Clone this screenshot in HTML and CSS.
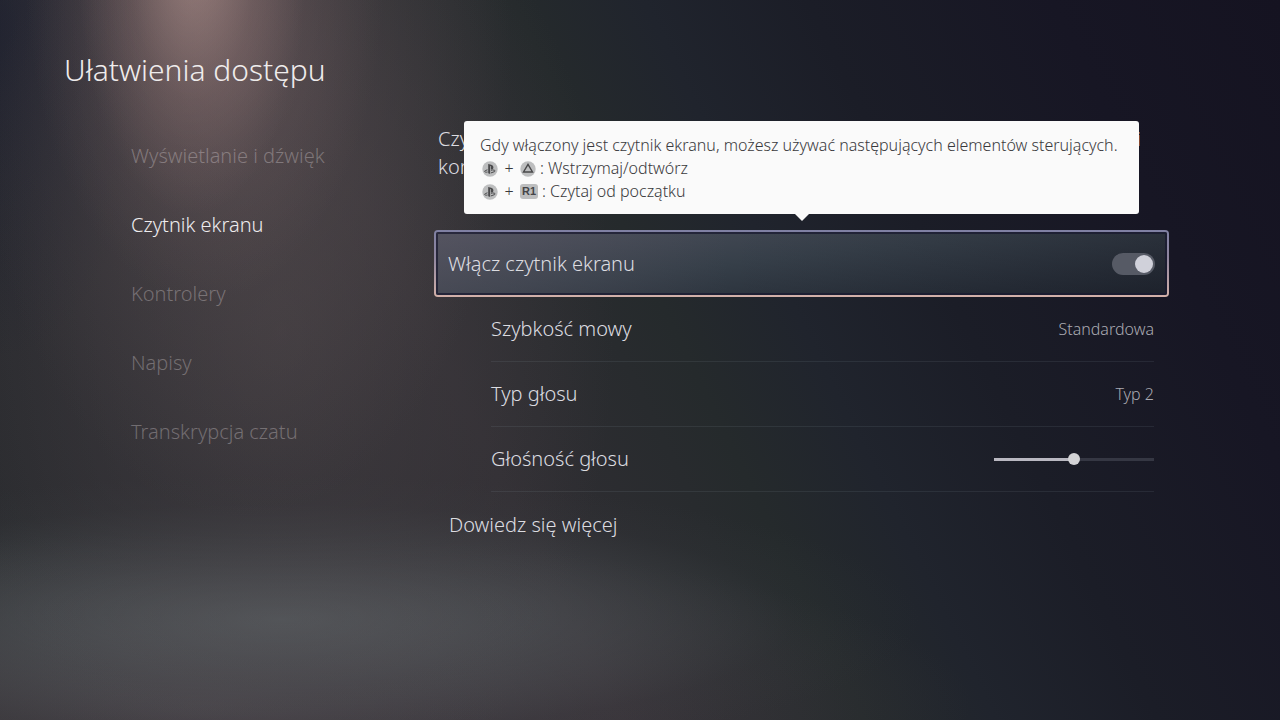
FILE: index.html
```html
<!DOCTYPE html>
<html lang="pl">
<head>
<meta charset="utf-8">
<meta name="viewport" content="width=device-width, initial-scale=1">
<title>Ułatwienia dostępu</title>
<link rel="stylesheet" href="styles.css">
</head>
<body>
<svg class="symbols" aria-hidden="true">
  <symbol id="ps" viewBox="0 0 16 16">
    <circle cx="8" cy="8" r="7.7" fill="#bdbebf"/>
    <path d="M6.2 3v9.200l2 .7V5.200c0-.5.7-.4.7.2v2.900c1.500.6 2.500-.2 2.500-1.800 0-1.500-.7-2.200-2.200-2.700z" fill="#4a4a4c"/>
    <path d="M5.500 8.800 3.500 9.500c-1.300.5-1.100 1.300.1 1.600.8.2 1.300.1 2-.1M9 9.300c1.200-.5 2.300-.4 3.300-.1 1.100.4 1 1.100 0 1.500l-3.300 1.200" fill="none" stroke="#4a4a4c"/>
  </symbol>
  <symbol id="triangle" viewBox="0 0 16 16">
    <circle cx="8" cy="8" r="7.7" fill="#bdbebf"/>
    <path d="M8 3.300 12.500 11h-9z" fill="none" stroke="#48484a" stroke-width="1.400"/>
  </symbol>
</svg>
<div class="screen">
  <h1 class="title">Ułatwienia dostępu</h1>
  <div class="layout">
    <nav class="sidebar">
      <a class="tab" href="#display">Wyświetlanie i dźwięk</a>
      <a class="tab tab-active" href="#reader" aria-current="page">Czytnik ekranu</a>
      <a class="tab" href="#controllers">Kontrolery</a>
      <a class="tab" href="#captions">Napisy</a>
      <a class="tab" href="#transcription">Transkrypcja czatu</a>
    </nav>
    <main class="settings">
      <div class="intro">
        <p class="intro-line"><span>Czy</span><span>i</span></p>
        <p class="intro-line">kon</p>
      </div>
      <div class="row row-focused">
        <label for="reader-on">Włącz czytnik ekranu</label>
        <input class="toggle" id="reader-on" type="checkbox" role="switch" aria-describedby="hint" checked>
        <div class="tooltip" id="hint" role="tooltip">
          <p class="tooltip-line">Gdy włączony jest czytnik ekranu, możesz używać następujących elementów sterujących.</p>
          <p class="tooltip-line keys"><svg class="key"><use href="#ps"/></svg><span class="plus">+</span><svg class="key"><use href="#triangle"/></svg><span>: Wstrzymaj/odtwórz</span></p>
          <p class="tooltip-line keys"><svg class="key"><use href="#ps"/></svg><span class="plus">+</span><span class="key-r1">R1</span><span>: Czytaj od początku</span></p>
        </div>
      </div>
      <div class="group">
        <button class="row row-sub" type="button"><span>Szybkość mowy</span><span class="value">Standardowa</span></button>
        <button class="row row-sub" type="button"><span>Typ głosu</span><span class="value">Typ 2</span></button>
        <div class="row row-sub"><label for="volume">Głośność głosu</label><input class="slider" id="volume" type="range" min="0" max="100" value="50"></div>
      </div>
      <button class="row" type="button">Dowiedz się więcej</button>
    </main>
  </div>
</div>
</body>
</html>
```
FILE: styles.css
```css
* { box-sizing: border-box; }

body {
  margin: 0;
  background: #171724;
  color: #dcdce0;
  font-family: "Noto Sans", "Open Sans", sans-serif;
  font-weight: 300;
  font-size: 20px;
  line-height: 28px;
}

h1, p { margin: 0; font-weight: 300; }

button {
  border: 0;
  background: none;
  color: inherit;
  font: inherit;
  text-align: left;
  cursor: pointer;
}

.symbols { position: absolute; width: 0; height: 0; }

/* Spotlight falling from the top left onto a pale floor. */
.screen {
  min-height: 100vh;
  padding: 48px 0 24px;
  background:
    radial-gradient(ellipse 9% 36% at 15% -6%, rgba(200, 165, 158, .48), rgba(170, 135, 132, .2) 55%, transparent),
    radial-gradient(ellipse 14% 46% at 16% -4%, rgba(165, 130, 130, .36), rgba(130, 105, 108, .2) 55%, transparent),
    radial-gradient(ellipse 21% 62% at 19% 10%, rgba(110, 96, 97, .36), rgba(100, 88, 90, .2) 55%, transparent),
    radial-gradient(ellipse 26% 72% at 22% 46%, rgba(82, 74, 77, .46), rgba(75, 68, 72, .28) 55%, transparent),
    radial-gradient(ellipse 50% 20% at 22% 86%, rgba(112, 124, 126, .54), rgba(96, 106, 108, .3) 45%, rgba(70, 78, 80, .08) 80%, transparent),
    radial-gradient(ellipse 60% 24% at 16% 98%, rgba(108, 94, 102, .42), rgba(90, 78, 86, .26) 50%, transparent),
    radial-gradient(ellipse 12% 46% at 0% 4%, rgba(24, 28, 46, .6), transparent),
    linear-gradient(64deg, #2a2c2f 0%, #2b2b30 20%, #302e33 38%, #282b2e 49%, #252a2c 53%, #20242d 61%, #1b1d27 71%, #171624 86%, #151321 100%);
}

.title {
  padding-left: 64px;
  font-size: 30px;
  line-height: 44px;
  color: #efecec;
}

.layout {
  display: grid;
  grid-template-columns: 303px minmax(0, 1fr);
  padding: 29px 111px 0 131px;
}

.sidebar { display: flex; flex-direction: column; }

.tab {
  line-height: 69px;
  color: rgba(225, 218, 220, .34);
  text-decoration: none;
}

.tab-active { color: #eeecee; }

.settings { display: flex; flex-direction: column; padding-top: 4px; }

.intro { padding: 0 28px 49px 4px; }

.intro-line { display: flex; justify-content: space-between; }

.row {
  display: flex;
  align-items: center;
  justify-content: space-between;
  height: 65px;
  padding: 0 15px;
}

.row-focused {
  position: relative;
  height: 67px;
  border: 2px solid transparent;
  border-radius: 4px;
  padding: 0 12px;
  background:
    linear-gradient(to right, rgba(110, 98, 112, .3), transparent 40%, rgba(20, 20, 30, .25)) padding-box,
    linear-gradient(174deg, #4a4e5a, #363f49 45%, #202630) padding-box,
    linear-gradient(#7f80a3, #8f86a0 40%, #d3b1a9) border-box;
  box-shadow: inset 0 0 0 2px rgba(25, 25, 48, .75);
}

.group { margin-left: 57px; margin-right: 15px; }

.row-sub {
  width: 100%;
  padding: 0;
  border-bottom: 1px solid rgba(170, 185, 195, .1);
}

.value { font-size: 16px; color: #aaaab2; }

.toggle {
  display: flex;
  align-items: center;
  justify-content: flex-end;
  appearance: none;
  width: 43px;
  height: 22px;
  margin: 0;
  padding: 2px;
  border-radius: 11px;
  background: #565a65;
}

.toggle::before {
  content: "";
  width: 18px;
  height: 18px;
  border-radius: 50%;
  background: #d0d1da;
}

.toggle:not(:checked) { justify-content: flex-start; }

.slider {
  appearance: none;
  width: 160px;
  height: 12px;
  margin: 0;
  background: linear-gradient(to right, #b9b8c1 50%, #353743 50%) center / 100% 3px no-repeat;
}

.slider::-webkit-slider-thumb {
  appearance: none;
  width: 12px;
  height: 12px;
  border-radius: 50%;
  background: #d3d3d6;
}

.tooltip {
  position: absolute;
  bottom: calc(100% + 18px);
  left: 28px;
  right: 28px;
  padding: 13px 16px 11px;
  border-radius: 3px;
  background: #fafafa;
  color: #39393c;
  font-size: 16px;
  line-height: 23px;
}

.tooltip::after {
  content: "";
  position: absolute;
  top: 100%;
  left: calc(50% - 7px);
  border: 7px solid transparent;
  border-bottom: 0;
  border-top-color: #fafafa;
}

.tooltip-line { white-space: nowrap; }

.keys { display: flex; align-items: center; gap: 4px; padding-left: 2px; }

.key { width: 16px; height: 16px; }

.plus { width: 14px; text-align: center; }

.key-r1 {
  width: 18px;
  border-radius: 3px;
  background: #bdbebf;
  color: #454547;
  font-family: "Liberation Sans", sans-serif;
  font-size: 11px;
  font-weight: 700;
  line-height: 15px;
  text-align: center;
}
```
